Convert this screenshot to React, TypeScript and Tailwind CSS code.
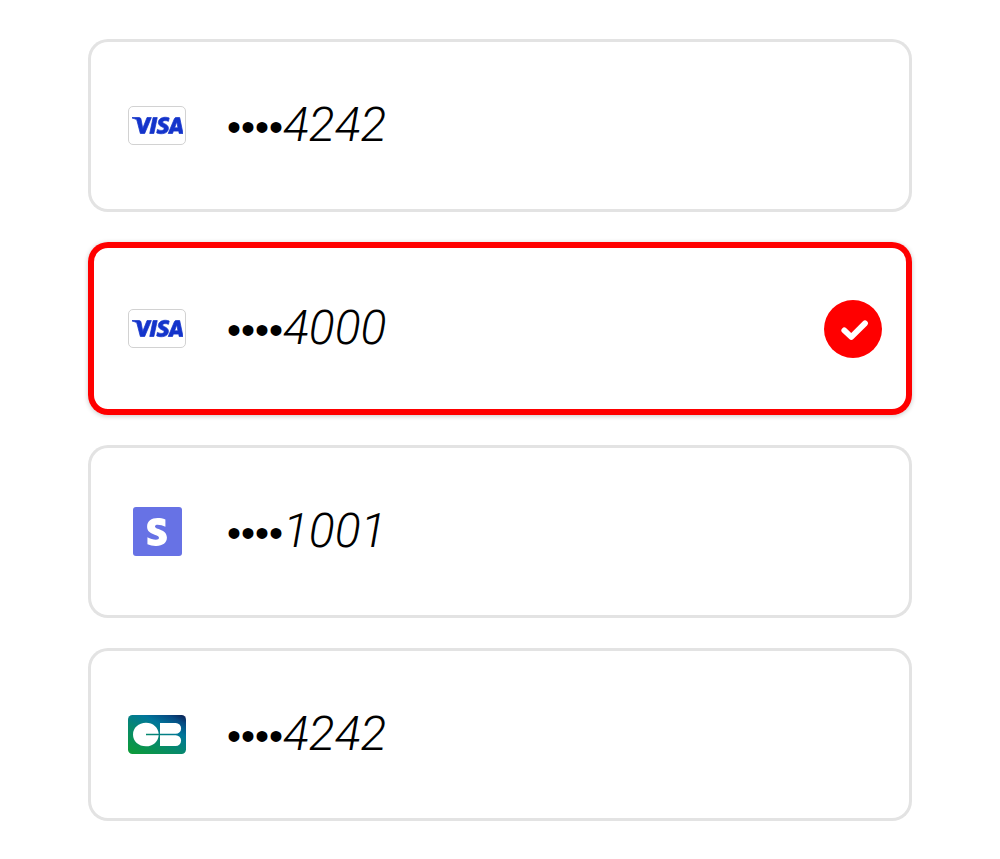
import { useState } from "react";
import { FaStripeS } from "react-icons/fa";
import { SiVisa } from "react-icons/si";

type Brand = "visa" | "stripe" | "cb";

interface PaymentCard {
  id: string;
  brand: Brand;
  last4: string;
}

const cards: PaymentCard[] = [
  { id: "visa-4242", brand: "visa", last4: "4242" },
  { id: "visa-4000", brand: "visa", last4: "4000" },
  { id: "stripe-1001", brand: "stripe", last4: "1001" },
  { id: "cb-4242", brand: "cb", last4: "4242" },
];

function BrandIcon({ brand }: { brand: Brand }) {
  if (brand === "visa") {
    return (
      <span className="flex h-[39px] w-[58px] items-center justify-center rounded-[5px] border border-[#d2d2d2] bg-white">
        <SiVisa size={51} color="#1434cb" className="stroke-[#1434cb] stroke-[0.35px]" aria-hidden="true" />
      </span>
    );
  }
  if (brand === "stripe") {
    return (
      <span className="flex size-[49px] items-center justify-center rounded-[3px] bg-[#6772e5]">
        <FaStripeS size={28} color="#ffffff" aria-hidden="true" />
      </span>
    );
  }
  return (
    <svg width="58" height="39" viewBox="0 0 58 39" aria-hidden="true">
      <defs>
        <linearGradient id="cb-fill" x1="18" y1="44" x2="44" y2="-8" gradientUnits="userSpaceOnUse">
          <stop offset="0" stopColor="#0c9a3c" />
          <stop offset="0.35" stopColor="#078a69" />
          <stop offset="0.65" stopColor="#00769a" />
          <stop offset="0.84" stopColor="#074b83" />
          <stop offset="1" stopColor="#0b1648" />
        </linearGradient>
      </defs>
      <rect width="58" height="39" rx="4.5" fill="url(#cb-fill)" />
      <path
        d="M18 18.8H30.7C30.2 12.4 25.1 7.7 18 7.7C10.5 7.7 5 12.8 5 19.5S10.5 31.3 18 31.3C25.1 31.3 30.2 26.6 30.7 20.2H18Z"
        fill="#fff"
      />
      <path d="M32 8H47.7a5.4 5.4 0 0 1 0 10.8H32ZM32 20.2H47.7a5.4 5.4 0 0 1 0 10.8H32Z" fill="#fff" />
    </svg>
  );
}

function CheckBadge() {
  return (
    <svg width="58" height="58" viewBox="0 0 58 58" aria-hidden="true">
      <circle cx="29" cy="29" r="29" fill="#ff0000" />
      <path
        d="M20.3 30.4L27.3 37L41 23.4"
        fill="none"
        stroke="#fff"
        strokeWidth="5.8"
        strokeLinecap="round"
        strokeLinejoin="round"
      />
    </svg>
  );
}

export default function App() {
  const [selected, setSelected] = useState("visa-4000");

  return (
    <main className="bg-white px-[88px] pt-[39px] pb-[38px]">
      <div role="radiogroup" aria-label="Payment method" className="flex flex-col gap-[30px]">
        {cards.map((card) => {
          const isSelected = card.id === selected;
          return (
            <label
              key={card.id}
              className={`relative flex cursor-pointer items-center rounded-[20px] py-[54px] pr-[30px] pl-10 ring-inset ${
                isSelected
                  ? "shadow-[0_1px_5px_rgba(0,0,0,0.22)] ring-[6px] ring-[#ff0000]"
                  : "ring-[3px] ring-[#e3e3e3]"
              }`}
            >
              <input
                type="radio"
                name="payment-method"
                value={card.id}
                aria-label={`${card.brand} ${card.last4}`}
                checked={isSelected}
                onChange={() => setSelected(card.id)}
                className="sr-only"
              />
              <span className="flex w-[58px] justify-center">
                <BrandIcon brand={card.brand} />
              </span>
              <span className="ml-[41px] flex h-[65px] grow items-baseline text-black">
                <span className="font-['Liberation_Sans',sans-serif] text-[40px] leading-[64px]">••••</span>
                <span className="font-[Roboto,sans-serif] text-[48px] leading-[64px] font-light italic">
                  {card.last4}
                </span>
              </span>
              {isSelected && <CheckBadge />}
            </label>
          );
        })}
      </div>
    </main>
  );
}
